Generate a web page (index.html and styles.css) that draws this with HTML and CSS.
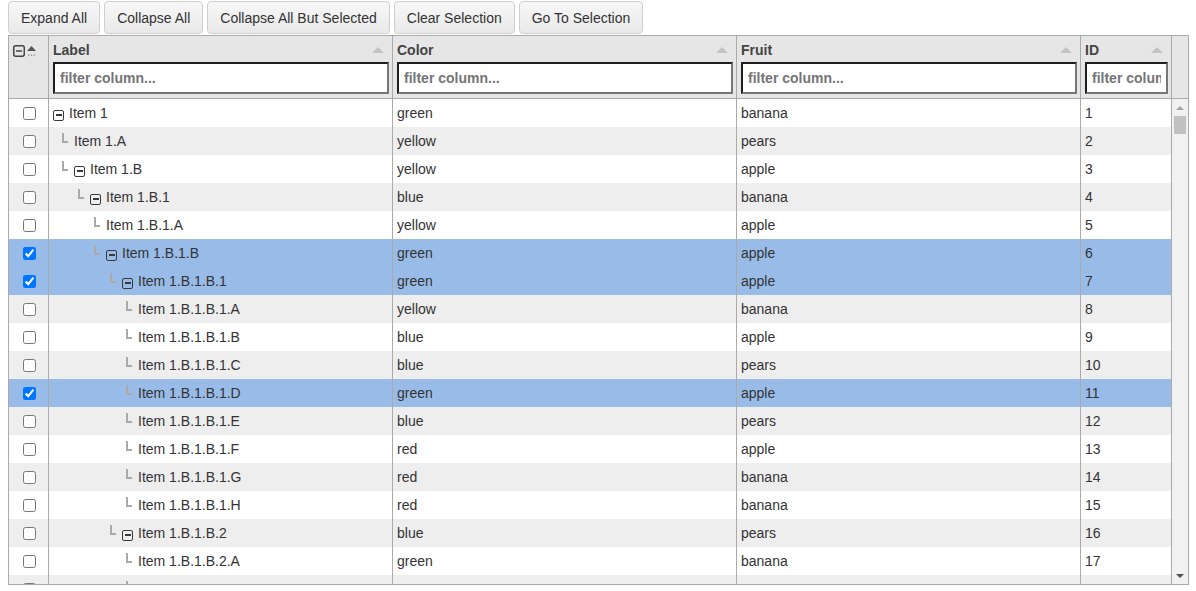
FILE: index.html
```html
<!DOCTYPE html>
<html>
<head>
<meta charset="utf-8">
<link rel="stylesheet" href="styles.css">
</head>
<body>
<div class="page">
  <div class="toolbar">
    <button class="btn">Expand All</button>
    <button class="btn">Collapse All</button>
    <button class="btn">Collapse All But Selected</button>
    <button class="btn">Clear Selection</button>
    <button class="btn">Go To Selection</button>
  </div>
  <div class="grid">
    <div class="head">
      <div class="hcell hsel">
        <svg class="selall" width="24" height="12" viewBox="0 0 24 12">
          <rect x="0.75" y="0.75" width="10.5" height="10.5" rx="2" fill="none" stroke="#444" stroke-width="1.5"/>
          <line x1="3" y1="6" x2="9" y2="6" stroke="#444" stroke-width="1.5"/>
          <polygon points="14,6 18.5,1 23,6" fill="#555"/>
          <rect x="15" y="9.5" width="1.3" height="1.3" fill="#6d8fbf"/>
          <rect x="17.8" y="9.5" width="1.3" height="1.3" fill="#b08a5a"/>
          <rect x="20.6" y="9.5" width="1.3" height="1.3" fill="#6d8fbf"/>
        </svg>
      </div>
      <div class="hcell">
        <div class="htitle"><span>Label</span><span class="sort"></span></div>
        <input class="filter" type="text" placeholder="filter column...">
      </div>
      <div class="hcell">
        <div class="htitle"><span>Color</span><span class="sort"></span></div>
        <input class="filter" type="text" placeholder="filter column...">
      </div>
      <div class="hcell">
        <div class="htitle"><span>Fruit</span><span class="sort"></span></div>
        <input class="filter" type="text" placeholder="filter column...">
      </div>
      <div class="hcell">
        <div class="htitle"><span>ID</span><span class="sort"></span></div>
        <input class="filter" type="text" placeholder="filter column...">
      </div>
      <div class="hcell hscroll"></div>
    </div>
    <div class="body">
      <div class="rows">
        <div class="row"><div class="cell csel"><input type="checkbox"></div><div class="cell tree l0"><span class="tog"></span>Item 1</div><div class="cell">green</div><div class="cell">banana</div><div class="cell">1</div></div>
        <div class="row"><div class="cell csel"><input type="checkbox"></div><div class="cell tree l1"><span class="conn"></span>Item 1.A</div><div class="cell">yellow</div><div class="cell">pears</div><div class="cell">2</div></div>
        <div class="row"><div class="cell csel"><input type="checkbox"></div><div class="cell tree l1"><span class="conn"></span><span class="tog"></span>Item 1.B</div><div class="cell">yellow</div><div class="cell">apple</div><div class="cell">3</div></div>
        <div class="row"><div class="cell csel"><input type="checkbox"></div><div class="cell tree l2"><span class="conn"></span><span class="tog"></span>Item 1.B.1</div><div class="cell">blue</div><div class="cell">banana</div><div class="cell">4</div></div>
        <div class="row"><div class="cell csel"><input type="checkbox"></div><div class="cell tree l3"><span class="conn"></span>Item 1.B.1.A</div><div class="cell">yellow</div><div class="cell">apple</div><div class="cell">5</div></div>
        <div class="row sel"><div class="cell csel"><input type="checkbox" checked></div><div class="cell tree l3"><span class="conn"></span><span class="tog"></span>Item 1.B.1.B</div><div class="cell">green</div><div class="cell">apple</div><div class="cell">6</div></div>
        <div class="row sel"><div class="cell csel"><input type="checkbox" checked></div><div class="cell tree l4"><span class="conn"></span><span class="tog"></span>Item 1.B.1.B.1</div><div class="cell">green</div><div class="cell">apple</div><div class="cell">7</div></div>
        <div class="row"><div class="cell csel"><input type="checkbox"></div><div class="cell tree l5"><span class="conn"></span>Item 1.B.1.B.1.A</div><div class="cell">yellow</div><div class="cell">banana</div><div class="cell">8</div></div>
        <div class="row"><div class="cell csel"><input type="checkbox"></div><div class="cell tree l5"><span class="conn"></span>Item 1.B.1.B.1.B</div><div class="cell">blue</div><div class="cell">apple</div><div class="cell">9</div></div>
        <div class="row"><div class="cell csel"><input type="checkbox"></div><div class="cell tree l5"><span class="conn"></span>Item 1.B.1.B.1.C</div><div class="cell">blue</div><div class="cell">pears</div><div class="cell">10</div></div>
        <div class="row sel"><div class="cell csel"><input type="checkbox" checked></div><div class="cell tree l5"><span class="conn"></span>Item 1.B.1.B.1.D</div><div class="cell">green</div><div class="cell">apple</div><div class="cell">11</div></div>
        <div class="row"><div class="cell csel"><input type="checkbox"></div><div class="cell tree l5"><span class="conn"></span>Item 1.B.1.B.1.E</div><div class="cell">blue</div><div class="cell">pears</div><div class="cell">12</div></div>
        <div class="row"><div class="cell csel"><input type="checkbox"></div><div class="cell tree l5"><span class="conn"></span>Item 1.B.1.B.1.F</div><div class="cell">red</div><div class="cell">apple</div><div class="cell">13</div></div>
        <div class="row"><div class="cell csel"><input type="checkbox"></div><div class="cell tree l5"><span class="conn"></span>Item 1.B.1.B.1.G</div><div class="cell">red</div><div class="cell">banana</div><div class="cell">14</div></div>
        <div class="row"><div class="cell csel"><input type="checkbox"></div><div class="cell tree l5"><span class="conn"></span>Item 1.B.1.B.1.H</div><div class="cell">red</div><div class="cell">banana</div><div class="cell">15</div></div>
        <div class="row"><div class="cell csel"><input type="checkbox"></div><div class="cell tree l4"><span class="conn"></span><span class="tog"></span>Item 1.B.1.B.2</div><div class="cell">blue</div><div class="cell">pears</div><div class="cell">16</div></div>
        <div class="row"><div class="cell csel"><input type="checkbox"></div><div class="cell tree l5"><span class="conn"></span>Item 1.B.1.B.2.A</div><div class="cell">green</div><div class="cell">banana</div><div class="cell">17</div></div>
        <div class="row"><div class="cell csel"><input type="checkbox"></div><div class="cell tree l5"><span class="conn"></span></div><div class="cell"></div><div class="cell"></div><div class="cell"></div></div>
      </div>
      <div class="vscroll">
        <div class="arrow up"></div>
        <div class="thumb"></div>
        <div class="track"></div>
        <div class="arrow down"></div>
      </div>
    </div>
  </div>
</div>
</body>
</html>
```

FILE: styles.css
```css
* { box-sizing: border-box; }

html, body {
  margin: 0;
  padding: 0;
  background: #fff;
}

body {
  font-family: "Liberation Sans", Arial, sans-serif;
  font-size: 14px;
  color: #333;
}

.page {
  padding: 1px 8px 0 8px;
}

.toolbar {
  display: flex;
  gap: 4px;
  height: 33px;
  margin-bottom: 1px;
}

.btn {
  height: 33px;
  padding: 0 12px;
  border: 1px solid #cfcfcf;
  border-radius: 4px;
  background: linear-gradient(#f7f7f7, #e9e9e9);
  font-family: "Liberation Sans", Arial, sans-serif;
  font-size: 14px;
  color: #333;
}

.grid {
  width: 1181px;
  border: 1px solid #aaa;
}

.head {
  display: grid;
  grid-template-columns: 39px 344px 344px 344px 91px 17px;
  background: #e6e6e6;
  border-bottom: 1px solid #aaa;
  height: 63px;
}

.hcell {
  border-left: 1px solid #aaa;
  padding: 4px 3px 4px 4px;
}

.hcell.hsel {
  border-left: none;
  padding: 9px 0 0 4px;
}

.selall {
  display: block;
}

.htitle {
  height: 20px;
  display: flex;
  align-items: center;
  justify-content: space-between;
  font-weight: bold;
  color: #444;
  margin-bottom: 2px;
}

.sort {
  width: 0;
  height: 0;
  border-left: 6px solid transparent;
  border-right: 6px solid transparent;
  border-bottom: 6px solid #c3c3c3;
  margin-right: 5px;
}

.filter {
  display: block;
  width: 100%;
  height: 32px;
  margin: 0;
  padding: 0 5px;
  border-width: 2px;
  border-style: solid;
  border-color: #1e1e1e #767676 #767676 #1e1e1e;
  background: #fff;
  font-family: "Liberation Sans", Arial, sans-serif;
  font-size: 14px;
  font-weight: bold;
  color: #333;
  border-radius: 0;
  outline: none;
}

.filter::placeholder {
  color: #757575;
  font-weight: bold;
}

.body {
  display: flex;
  height: 485px;
  overflow: hidden;
}

.rows {
  width: 1162px;
  height: 485px;
  overflow: hidden;
}

.row {
  display: grid;
  grid-template-columns: 39px 344px 344px 344px 91px;
  height: 28px;
  background: #fff;
}

.row:nth-child(even) {
  background: #eee;
}

.row.sel {
  background: #99bbe8;
}

.cell {
  border-left: 1px solid #aaa;
  padding-left: 4px;
  display: flex;
  align-items: center;
  white-space: nowrap;
  overflow: hidden;
}

.cell.csel {
  border-left: none;
  padding-left: 0;
  justify-content: center;
}

.csel input {
  margin: 0 0 0 1px;
  width: 13px;
  height: 13px;
}

.tree.l1 { padding-left: 13px; }
.tree.l2 { padding-left: 29px; }
.tree.l3 { padding-left: 45px; }
.tree.l4 { padding-left: 61px; }
.tree.l5 { padding-left: 77px; }

.conn {
  flex: none;
  width: 6px;
  height: 10px;
  border-left: 2px solid #aaa;
  border-bottom: 2px solid #aaa;
  margin-right: 6px;
  margin-bottom: 6px;
}

.tog {
  flex: none;
  width: 11px;
  height: 11px;
  border: 1.5px solid #3a3a3a;
  border-radius: 2px;
  margin-right: 5px;
  margin-top: 4px;
  display: flex;
  align-items: center;
  justify-content: center;
}

.tog::after {
  content: "";
  width: 6px;
  height: 1.5px;
  background: #3a3a3a;
}

.vscroll {
  width: 17px;
  border-left: 1px solid #aaa;
  background: #f1f1f1;
  display: flex;
  flex-direction: column;
  align-items: center;
}

.arrow {
  height: 17px;
  width: 100%;
  display: flex;
  align-items: center;
  justify-content: center;
}

.arrow::after {
  content: "";
  width: 0;
  height: 0;
  border-left: 4px solid transparent;
  border-right: 4px solid transparent;
}

.arrow.up::after {
  border-bottom: 4px solid #a3a3a3;
}

.arrow.down::after {
  border-top: 4px solid #505050;
}

.thumb {
  width: 12px;
  height: 18px;
  background: #c1c1c1;
}

.track {
  flex: 1;
}
```
